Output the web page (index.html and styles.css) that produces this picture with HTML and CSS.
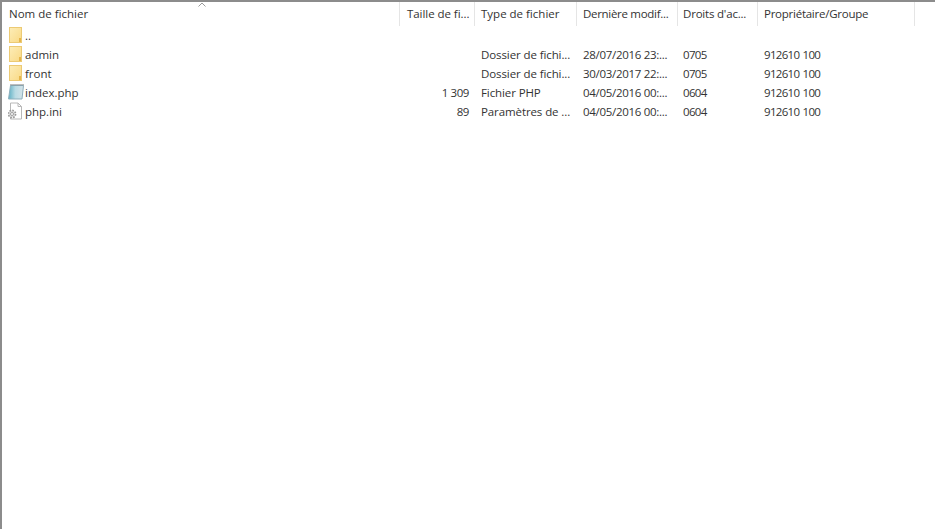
FILE: index.html
```html
<!DOCTYPE html>
<html lang="en">
<head>
    <meta charset="UTF-8">
    <title>Fichiers</title>
    <link rel="stylesheet" href="styles.css">
</head>
<body>
    <!-- Shared gradients for the file icons -->
    <svg class="defs" width="0" height="0">
        <defs>
            <linearGradient id="folder-fill" x1="0" y1="0" x2="1" y2="1">
                <stop offset="0" stop-color="#fdedb8"/>
                <stop offset="1" stop-color="#f9d985"/>
            </linearGradient>
            <linearGradient id="note-fill" x1="0" y1="0" x2="1" y2="0">
                <stop offset="0" stop-color="#5fb0c4"/>
                <stop offset="0.45" stop-color="#b9dbe4"/>
                <stop offset="1" stop-color="#d6e4ea"/>
            </linearGradient>
        </defs>
    </svg>

    <div class="listing">
        <!-- Header -->
        <div class="row head">
            <div class="cell col-name sep">Nom de fichier
                <svg class="sort-arrow" width="8" height="5" viewBox="0 0 8 5"><path d="M0.5 4.5 L4 1 L7.5 4.5" fill="none" stroke="#9a9a9a"/></svg>
            </div>
            <div class="cell col-size sep">Taille de fi...</div>
            <div class="cell col-type sep">Type de fichier</div>
            <div class="cell col-date sep">Dernière modif...</div>
            <div class="cell col-perm sep">Droits d'ac...</div>
            <div class="cell col-owner sep">Propriétaire/Groupe</div>
        </div>

        <!-- Files -->
        <div class="row">
            <div class="cell col-name">
                <svg class="icon" width="16" height="18" viewBox="0 0 16 18"><rect x="1.5" y="1.5" width="12" height="15" fill="url(#folder-fill)" stroke="#ecca74"/><rect x="11" y="12" width="2" height="4" fill="#e6b64c"/></svg>
                ..
            </div>
        </div>
        <div class="row">
            <div class="cell col-name">
                <svg class="icon" width="16" height="18" viewBox="0 0 16 18"><rect x="1.5" y="1.5" width="12" height="15" fill="url(#folder-fill)" stroke="#ecca74"/><rect x="11" y="12" width="2" height="4" fill="#e6b64c"/></svg>
                admin
            </div>
            <div class="cell col-size"></div>
            <div class="cell col-type">Dossier de fichi...</div>
            <div class="cell col-date">28/07/2016 23:...</div>
            <div class="cell col-perm">0705</div>
            <div class="cell col-owner">912610 100</div>
        </div>
        <div class="row">
            <div class="cell col-name">
                <svg class="icon" width="16" height="18" viewBox="0 0 16 18"><rect x="1.5" y="1.5" width="12" height="15" fill="url(#folder-fill)" stroke="#ecca74"/><rect x="11" y="12" width="2" height="4" fill="#e6b64c"/></svg>
                front
            </div>
            <div class="cell col-size"></div>
            <div class="cell col-type">Dossier de fichi...</div>
            <div class="cell col-date">30/03/2017 22:...</div>
            <div class="cell col-perm">0705</div>
            <div class="cell col-owner">912610 100</div>
        </div>
        <div class="row">
            <div class="cell col-name">
                <svg class="icon" width="16" height="18" viewBox="0 0 16 18"><path d="M2.5 2.5 H15.5 L14 16 H0.5 Z" fill="url(#note-fill)" stroke="#8fb0bd"/><path d="M3 2.5 V1 M5 2.5 V1 M7 2.5 V1 M9 2.5 V1 M11 2.5 V1 M13 2.5 V1 M15 2.5 V1" stroke="#7d7d7d"/></svg>
                index.php
            </div>
            <div class="cell col-size">1 309</div>
            <div class="cell col-type">Fichier PHP</div>
            <div class="cell col-date">04/05/2016 00:...</div>
            <div class="cell col-perm">0604</div>
            <div class="cell col-owner">912610 100</div>
        </div>
        <div class="row">
            <div class="cell col-name">
                <svg class="icon" width="16" height="18" viewBox="0 0 16 18"><path d="M2.5 1 H10 L13.5 4.5 V17 H2.5 Z" fill="#fff" stroke="#b8b8b8"/><path d="M10 1 V4.5 H13.5" fill="none" stroke="#b8b8b8"/><circle cx="4" cy="12" r="3.6" fill="#e0e0e0" stroke="#999" stroke-width="1.6" stroke-dasharray="1.6 1.2"/><circle cx="4" cy="12" r="1.5" fill="#fff" stroke="#a0a0a0"/></svg>
                php.ini
            </div>
            <div class="cell col-size">89</div>
            <div class="cell col-type">Paramètres de ...</div>
            <div class="cell col-date">04/05/2016 00:...</div>
            <div class="cell col-perm">0604</div>
            <div class="cell col-owner">912610 100</div>
        </div>
    </div>
</body>
</html>
```

FILE: styles.css
```css
* {
    margin: 0;
    padding: 0;
    box-sizing: border-box;
}

html, body {
    height: 100%;
}

body {
    background-color: white;
    font-family: "Open Sans", Arial, sans-serif;
    font-size: 11.5px;
    line-height: 15px;
    color: #333;
    overflow: hidden;
}

.defs {
    display: block;
}

.listing {
    height: 100%;
    border-top: 2px solid #8c8c8c;
    border-left: 2px solid #8c8c8c;
}

.row {
    display: flex;
    height: 19px;
}

.head {
    height: 24px;
}

.head .cell {
    padding-bottom: 1px;
}

.cell {
    position: relative;
    flex: none;
    display: flex;
    align-items: center;
    padding-left: 6px;
    white-space: nowrap;
}

.sep {
    border-right: 1px solid #e5e5e5;
}

.col-name {
    width: 398px;
    padding-left: 7px;
}

.row:not(.head) .col-name {
    padding-left: 6px;
}

.col-size {
    width: 75px;
    padding-left: 7px;
    letter-spacing: -0.05px;
}

.row:not(.head) .col-size {
    justify-content: flex-end;
    padding: 0 6px 0 0;
    letter-spacing: -0.4px;
}

.col-type {
    width: 102px;
    letter-spacing: -0.1px;
}

.head .col-type {
    letter-spacing: 0;
}

.col-date {
    width: 101px;
    letter-spacing: -0.3px;
}

.col-perm {
    width: 80px;
    padding-left: 5px;
    letter-spacing: -0.2px;
}

.row:not(.head) .col-perm {
    letter-spacing: -0.7px;
}

.col-owner {
    width: 157px;
    letter-spacing: -0.25px;
}

.row:not(.head) .col-owner {
    letter-spacing: -0.7px;
    word-spacing: 1px;
}

.icon {
    flex: none;
    align-self: flex-start;
    margin-right: 1px;
}

.sort-arrow {
    position: absolute;
    top: 0;
    left: 196px;
}
```
